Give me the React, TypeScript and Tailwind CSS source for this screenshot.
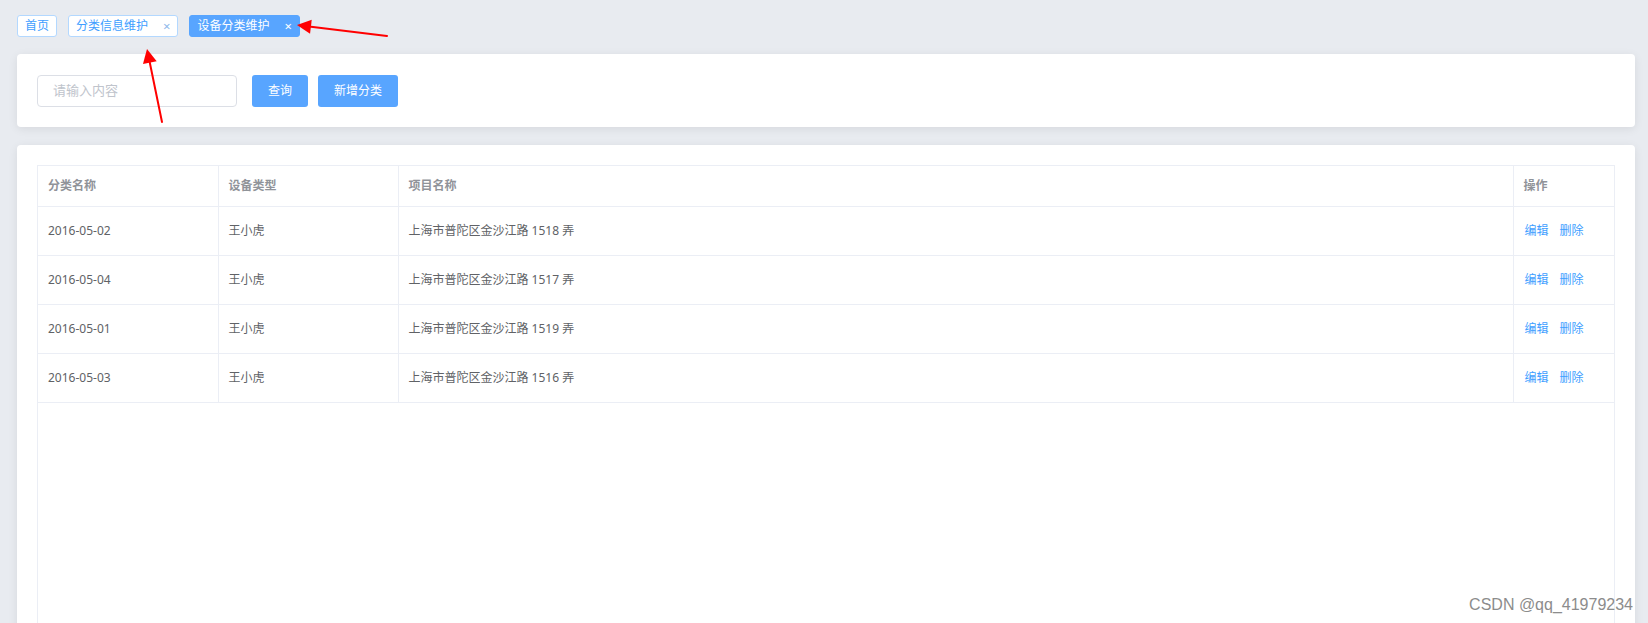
import React from 'react';

const rows = [
  { date: '2016-05-02', name: '王小虎', addr: '上海市普陀区金沙江路 1518 弄' },
  { date: '2016-05-04', name: '王小虎', addr: '上海市普陀区金沙江路 1517 弄' },
  { date: '2016-05-01', name: '王小虎', addr: '上海市普陀区金沙江路 1519 弄' },
  { date: '2016-05-03', name: '王小虎', addr: '上海市普陀区金沙江路 1516 弄' },
];

const font = { fontFamily: '"Noto Sans", "Noto Sans CJK SC", sans-serif' };

function Arrow({ x1, y1, x2, y2 }: { x1: number; y1: number; x2: number; y2: number }) {
  // tail (x1,y1) -> tip (x2,y2)
  const dx = x2 - x1;
  const dy = y2 - y1;
  const len = Math.hypot(dx, dy);
  const ux = dx / len;
  const uy = dy / len;
  const hl = 14;
  const hw = 7;
  const bx = x2 - ux * hl;
  const by = y2 - uy * hl;
  const pts = `${x2},${y2} ${bx - uy * hw},${by + ux * hw} ${bx + uy * hw},${by - ux * hw}`;
  return (
    <g>
      <line x1={x1} y1={y1} x2={bx + ux * 2} y2={by + uy * 2} stroke="#f00" strokeWidth="2" strokeLinecap="round" />
      <polygon points={pts} fill="#f00" />
    </g>
  );
}

const Tag: React.FC<{ label: string; active?: boolean; closable?: boolean }> = ({ label, active, closable }) => (
  <div
    className={
      'flex items-center h-[22px] px-[7px] rounded-[3px] border text-[12px] ' +
      (active ? 'bg-[#58a5ff] border-[#58a5ff] text-white' : 'bg-white border-[#b3d8ff] text-[#409eff]')
    }
  >
    <span>{label}</span>
    {closable && (
      <span className={'ml-[15px] text-[13px] leading-none ' + (active ? 'text-white' : 'text-[#8fb8ea]')}>×</span>
    )}
  </div>
);

export default function App() {
  return (
    <div className="relative h-screen overflow-hidden bg-[#e8ebf0] pl-[17px] pr-[13px] pt-[15px]" style={font}>
      <div className="flex gap-[11px]">
        <Tag label="首页" />
        <Tag label="分类信息维护" closable />
        <Tag label="设备分类维护" active closable />
      </div>

      <div className="mt-[17px] h-[73px] bg-white rounded-[4px] shadow-[0_2px_10px_0_rgba(0,0,0,0.08)] flex items-center px-5 gap-[15px]">
        <div className="w-[200px] h-[32px] border border-[#dcdfe6] rounded-[4px] flex items-center px-[15px] text-[13px] text-[#c0c4cc]">
          请输入内容
        </div>
        <button className="h-[32px] w-[56px] rounded-[3px] bg-[#58a5ff] text-white text-[12px]">查询</button>
        <button className="-ml-[5px] h-[32px] w-[80px] rounded-[3px] bg-[#58a5ff] text-white text-[12px]">新增分类</button>
      </div>

      <div className="mt-[18px] h-[520px] bg-white rounded-[4px] shadow-[0_2px_10px_0_rgba(0,0,0,0.08)] p-5">
        <div className="h-[520px] border border-[#ebeef5]">
          <table className="w-full table-fixed border-collapse text-[12px]">
            <colgroup>
              <col className="w-[180px]" />
              <col className="w-[180px]" />
              <col />
              <col className="w-[101px]" />
            </colgroup>
            <thead>
              <tr className="h-[40px] border-b border-[#ebeef5]">
                {['分类名称', '设备类型', '项目名称', '操作'].map((h, i) => (
                  <th
                    key={h}
                    className={
                      'text-left font-bold text-[#909399] pl-[10px] ' + (i < 3 ? 'border-r border-[#ebeef5]' : '')
                    }
                  >
                    {h}
                  </th>
                ))}
              </tr>
            </thead>
            <tbody>
              {rows.map((r) => (
                <tr key={r.date} className="h-[49px] border-b border-[#ebeef5] text-[#606266]">
                  <td className="pl-[10px] border-r border-[#ebeef5]">{r.date}</td>
                  <td className="pl-[10px] border-r border-[#ebeef5]">{r.name}</td>
                  <td className="pl-[10px] border-r border-[#ebeef5]">{r.addr}</td>
                  <td className="pl-[11px]">
                    <span className="text-[#409eff]">编辑</span>
                    <span className="ml-[11px] text-[#409eff]">删除</span>
                  </td>
                </tr>
              ))}
            </tbody>
          </table>
        </div>
      </div>

      <div
        className="absolute right-[15px] bottom-[6px] text-[16px] text-[#8c8c8c]"
        style={{ fontFamily: '"Liberation Sans", Arial, sans-serif' }}
      >
        CSDN @qq_41979234
      </div>

      <svg className="absolute inset-0 pointer-events-none" width="1648" height="623">
        <Arrow x1={162} y1={122} x2={147} y2={49} />
        <Arrow x1={387} y1={36} x2={297} y2={25} />
      </svg>
    </div>
  );
}
